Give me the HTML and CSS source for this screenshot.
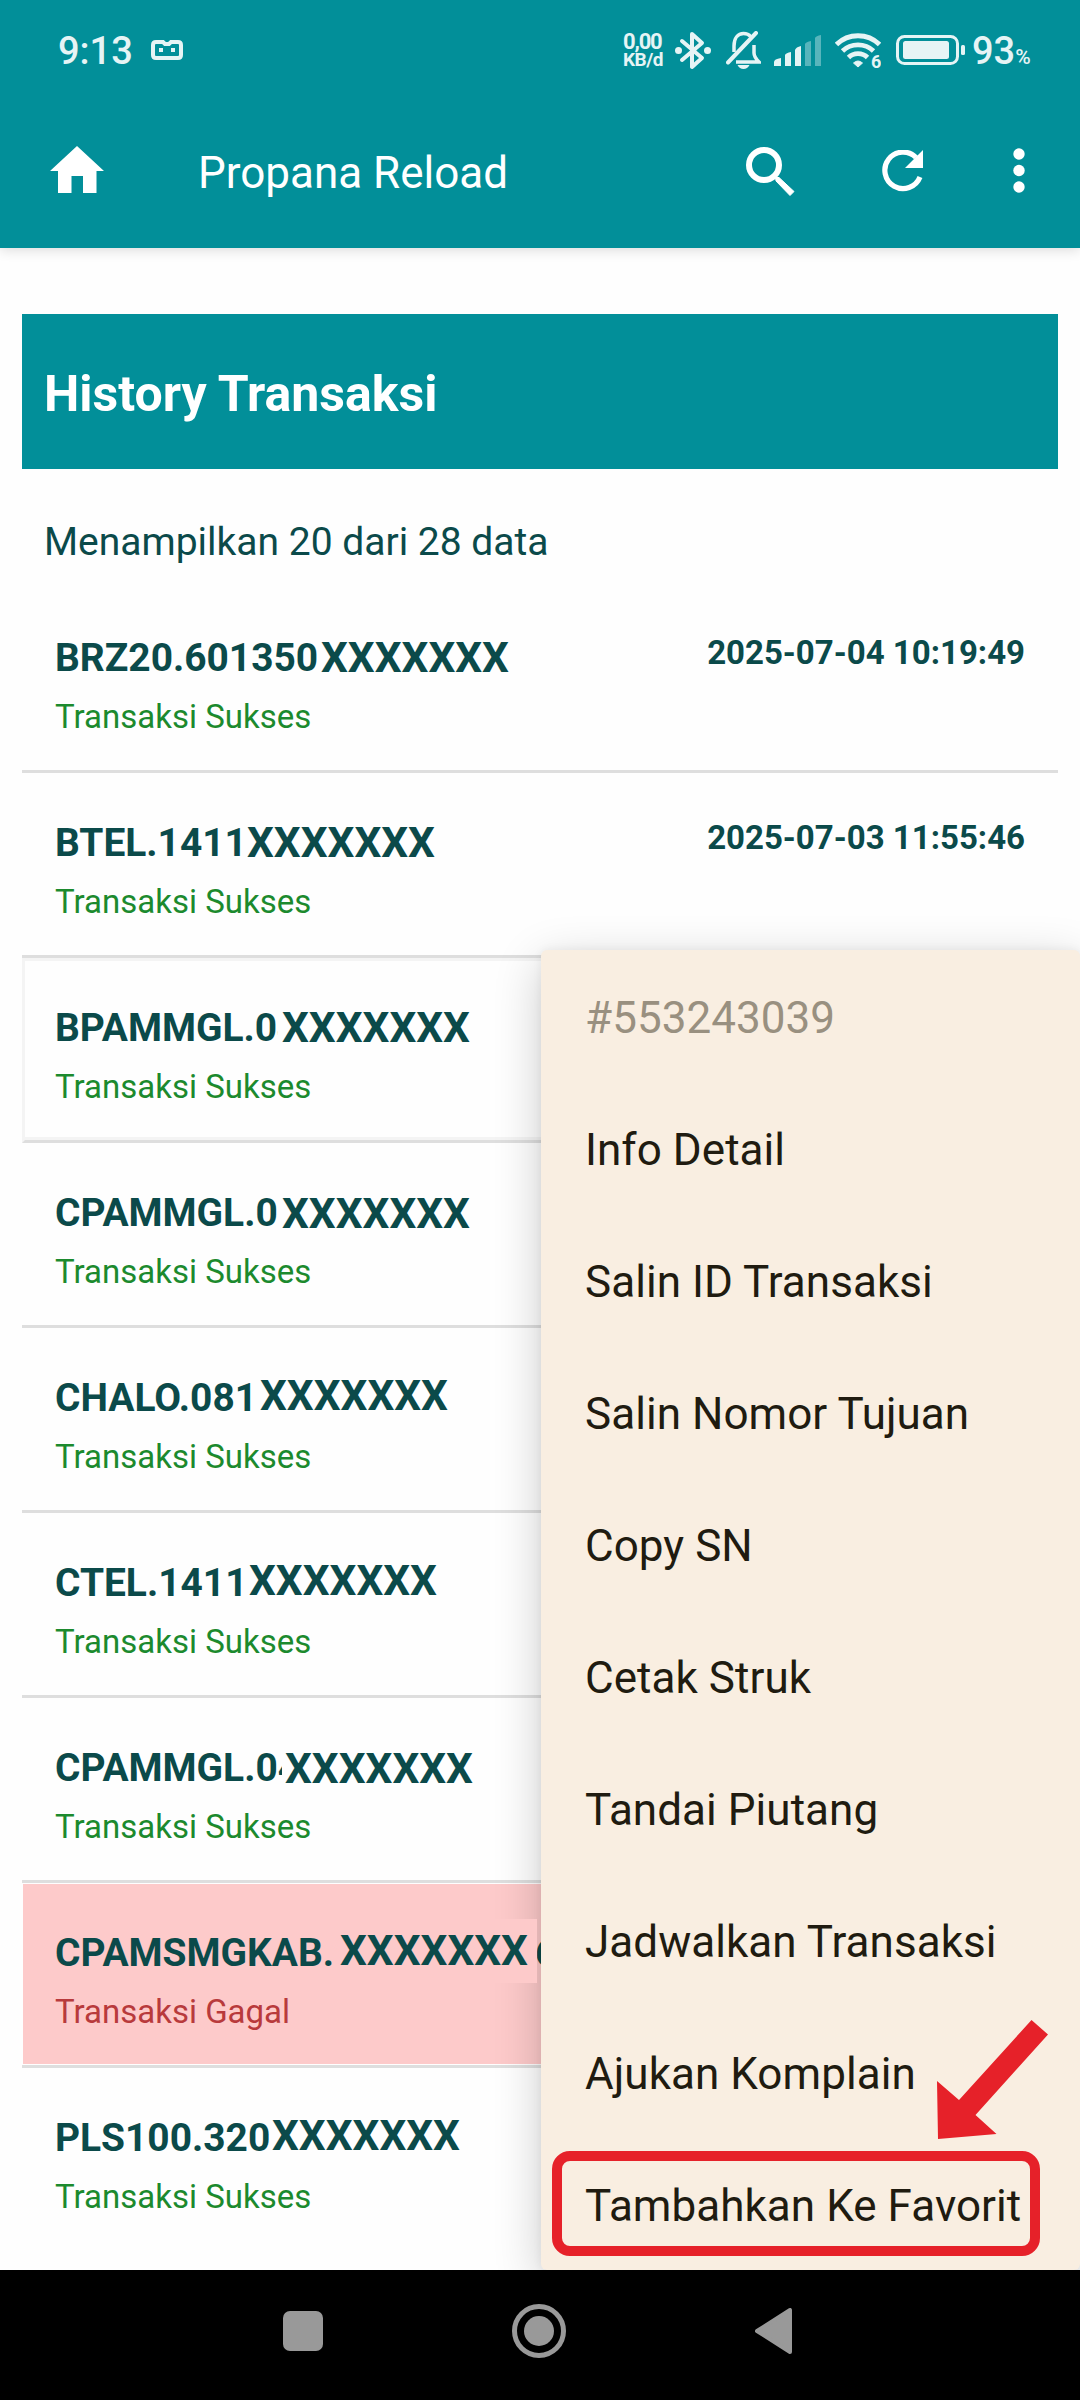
FILE: index.html
```html
<!DOCTYPE html>
<html lang="id">
<head>
  <meta charset="UTF-8">
  <meta name="viewport" content="width=device-width, initial-scale=1.0">
  <title>Propana Reload</title>
  <link rel="stylesheet" href="styles.css">
</head>
<body>

  <header class="top">
    <div class="status-bar">
      <span class="clock">9:13</span>
      <svg class="robot" width="32" height="20" viewBox="0 0 32 20">
        <path d="M2 5q0-3 3-3h7l2 2h4l2-2h7q3 0 3 3v10q0 3-3 3H5q-3 0-3-3z" fill="none" stroke="currentColor" stroke-width="4"/>
        <path d="M8 8h4v4H8zM20 8h4v4h-4z" fill="currentColor"/>
      </svg>
      <div class="net-speed"><span class="speed">0,00</span><span class="unit">KB/d</span></div>
      <svg class="bluetooth" width="36" height="39" viewBox="0 0 36 39">
        <path d="M7 10l20 17-10 9V3l10 9L7 29" fill="none" stroke="currentColor" stroke-width="4" stroke-linejoin="round" stroke-linecap="round"/>
        <circle cx="3.5" cy="19.5" r="3.5" fill="currentColor"/>
        <circle cx="32.5" cy="19.5" r="3.5" fill="currentColor"/>
      </svg>
      <svg class="bell" width="35" height="38" viewBox="0 0 35 38">
        <path d="M8 21v-6c0-8 4-12.500 9.500-12.500 3 0 5.500 1 7 3M10 31h23c-3-3-5-5-5-9v-8" fill="none" stroke="currentColor" stroke-width="3.500"/>
        <path d="M2 31.500L30 2" stroke="currentColor" stroke-width="4" stroke-linecap="round"/>
        <path d="M11.500 34h12q-2 4-6 4t-6-4z" fill="currentColor"/>
      </svg>
      <svg class="signal" width="48" height="31" viewBox="0 0 48 31">
        <path d="M0 31v-4q0-3 7-4v8zM11 31V20q1-2 6-3v14zM21 31V15q1-3 6-4v20z" fill="currentColor"/>
        <path d="M31 31V9q1-2 6-3v25zM41 31V3q1-2 6-3v31z" fill="currentColor" opacity=".38"/>
      </svg>
      <svg class="wifi" width="46" height="35" viewBox="0 0 46 35">
        <g fill="none" stroke="currentColor" stroke-width="4.800">
          <path d="M1.500 11.500a30 29 0 0 1 43 0"/>
          <path d="M7.500 18a22 21 0 0 1 31 0"/>
          <path d="M13.500 24.500a13 12 0 0 1 19 0"/>
        </g>
        <path d="M18.500 30q4.500-4 9 0l-4.500 4z" fill="currentColor" stroke="currentColor" stroke-linejoin="round"/>
        <text x="36" y="34.500" class="wifi-gen">6</text>
      </svg>
      <svg class="battery" width="69" height="30" viewBox="0 0 69 30">
        <rect x="1.500" y="1.500" width="60" height="27" rx="7" fill="none" stroke="currentColor" stroke-width="3"/>
        <rect x="7" y="6" width="46" height="18" rx="2.500" fill="currentColor"/>
        <rect x="65" y="10" width="4" height="10" rx="1.500" fill="currentColor"/>
      </svg>
      <span class="percent">93<small>%</small></span>
    </div>

    <div class="app-bar">
      <svg class="home" width="54" height="47" viewBox="0 0 54 47">
        <path d="M27 0l27 25h-7.500v22H33V30H21.500v17H8V25H0z" fill="currentColor"/>
      </svg>
      <span class="app-title">Propana Reload</span>
      <svg class="search" width="49" height="49" viewBox="0 0 49 49">
        <circle cx="18" cy="18" r="15" fill="none" stroke="currentColor" stroke-width="6"/>
        <path d="M29.500 30.500h3.500L48 44.500l-4 4L30 34z" fill="currentColor" stroke="currentColor"/>
      </svg>
      <svg class="refresh" width="42" height="42" viewBox="0 0 42 42">
        <path d="M34 7.500A18.200 18.200 0 1 0 38 27" fill="none" stroke="currentColor" stroke-width="5.200"/>
        <path d="M41 0v18H23z" fill="currentColor"/>
      </svg>
      <svg class="more" width="12" height="46" viewBox="0 0 12 46">
        <circle cx="6" cy="6" r="5.700" fill="currentColor"/>
        <circle cx="6" cy="22.500" r="5.700" fill="currentColor"/>
        <circle cx="6" cy="39" r="5.700" fill="currentColor"/>
      </svg>
    </div>
  </header>

  <main class="content">
    <h1>History Transaksi</h1>
    <p class="summary">Menampilkan 20 dari 28 data</p>

    <ul class="history">
      <li>
        <div class="trx"><span class="code c1">BRZ20.601350</span><span class="mask">XXXXXXX</span></div>
        <span class="state">Transaksi Sukses</span>
        <time>2025-07-04 10:19:49</time>
      </li>
      <li>
        <div class="trx"><span class="code c2">BTEL.1411</span><span class="mask">XXXXXXX</span></div>
        <span class="state">Transaksi Sukses</span>
        <time>2025-07-03 11:55:46</time>
      </li>
      <li class="selected">
        <div class="trx"><span class="code c3">BPAMMGL.04</span><span class="mask">XXXXXXX</span></div>
        <span class="state">Transaksi Sukses</span>
      </li>
      <li>
        <div class="trx"><span class="code c4">CPAMMGL.0</span><span class="mask low">XXXXXXX</span></div>
        <span class="state">Transaksi Sukses</span>
      </li>
      <li>
        <div class="trx"><span class="code c5">CHALO.081</span><span class="mask high">XXXXXXX</span></div>
        <span class="state">Transaksi Sukses</span>
      </li>
      <li>
        <div class="trx"><span class="code c6">CTEL.1411</span><span class="mask high">XXXXXXX</span></div>
        <span class="state">Transaksi Sukses</span>
      </li>
      <li>
        <div class="trx"><span class="code c7">CPAMMGL.04</span><span class="mask low">XXXXXXX</span></div>
        <span class="state">Transaksi Sukses</span>
      </li>
      <li class="failed">
        <div class="trx"><span class="code c8">CPAMSMGKAB.</span><span class="mask high">XXXXXXX</span><span class="code tail">6</span></div>
        <span class="state">Transaksi Gagal</span>
      </li>
      <li>
        <div class="trx"><span class="code c9">PLS100.320</span><span class="mask high">XXXXXXX</span></div>
        <span class="state">Transaksi Sukses</span>
      </li>
    </ul>
  </main>

  <div class="menu">
    <div class="menu-item menu-id">#553243039</div>
    <div class="menu-item">Info Detail</div>
    <div class="menu-item">Salin ID Transaksi</div>
    <div class="menu-item">Salin Nomor Tujuan</div>
    <div class="menu-item">Copy SN</div>
    <div class="menu-item">Cetak Struk</div>
    <div class="menu-item">Tandai Piutang</div>
    <div class="menu-item">Jadwalkan Transaksi</div>
    <div class="menu-item">Ajukan Komplain</div>
    <div class="menu-item">Tambahkan Ke Favorit</div>
    <div class="highlight"></div>
    <svg class="arrow" width="111" height="119" viewBox="0 0 111 119">
      <path d="M94.500 0L111 14.500 38.500 95 59.500 114 1 119 0 61 22 80z" fill="#e62129"/>
    </svg>
  </div>

  <nav class="nav-bar">
    <svg width="40" height="40" viewBox="0 0 40 40"><rect width="40" height="40" rx="7" fill="currentColor"/></svg>
    <svg width="54" height="54" viewBox="0 0 54 54">
      <circle cx="27" cy="27" r="24.500" fill="none" stroke="currentColor" stroke-width="5"/>
      <circle cx="27" cy="27" r="15" fill="currentColor"/>
    </svg>
    <svg width="38" height="46" viewBox="0 0 38 46">
      <path d="M35 2v42L2 23z" fill="currentColor" stroke="currentColor" stroke-width="4" stroke-linejoin="round"/>
    </svg>
  </nav>

</body>
</html>
```
FILE: styles.css
```css
:root {
  --primary: #028f99;
  --text: #0b4a4a;
  --success: #1c8a2e;
  --danger: #b83a3c;
  --divider: #dedede;
}

* {
  box-sizing: border-box;
}

body {
  margin: 0;
  width: 1080px;
  height: 2400px;
  overflow: hidden;
  display: flex;
  flex-direction: column;
  position: relative;
  background: #fefefe;
  font-family: Roboto, sans-serif;
  color: var(--text);
}

svg {
  display: block;
  flex: none;
}

/* header */
.top {
  height: 248px;
  flex: none;
  background: var(--primary);
  color: #fff;
  box-shadow: 0 2px 12px rgba(0, 0, 0, 0.14);
}

.status-bar {
  display: flex;
  align-items: center;
  height: 100px;
  padding-left: 58px;
  color: #e6f4f5;
}

.clock,
.percent {
  padding-top: 2px;
  font-size: 38px;
  font-weight: 500;
  line-height: 44px;
}

.clock {
  width: 93px;
}

.net-speed {
  display: flex;
  flex-direction: column;
  width: 52px;
  margin-left: 440px;
  padding-top: 1px;
  font-weight: 700;
  line-height: 18px;
}

.speed {
  font-size: 22px;
  letter-spacing: -1.2px;
}

.unit {
  font-size: 19px;
  letter-spacing: -0.5px;
}

.bell {
  margin-left: 15px;
}

.signal {
  margin-left: 13px;
}

.wifi {
  margin-left: 13px;
}

.wifi-gen {
  font-size: 18px;
  font-weight: 700;
  fill: currentColor;
}

.battery {
  margin-left: 15px;
}

.percent {
  margin-left: 7px;
}

.percent small {
  font-size: 21px;
  line-height: 1;
}

.app-bar {
  display: flex;
  align-items: center;
  height: 142px;
  padding-left: 50px;
}

.home {
  margin-bottom: 4px;
}

.app-title {
  width: 548px;
  margin-left: 94px;
  padding-top: 3px;
  font-size: 44px;
  line-height: 52px;
}

.refresh {
  margin-left: 87px;
}

.more {
  margin-left: 89px;
}

/* content */
.content {
  flex: 1;
  padding: 66px 22px 0;
  min-height: 0;
}

h1 {
  margin: 0;
  height: 155px;
  padding-left: 22px;
  background: var(--primary);
  color: #fff;
  font-size: 50px;
  font-weight: 700;
  line-height: 161px;
}

.summary {
  margin: 0;
  height: 119px;
  padding: 50px 22px 0;
  font-size: 39px;
  line-height: 46px;
}

.history {
  list-style: none;
  margin: 0;
  padding: 0;
}

.history li {
  display: grid;
  grid-template-columns: 1fr auto;
  grid-template-rows: 60px 46px;
  height: 185px;
  padding: 46px 33px 0;
  border-bottom: 3px solid var(--divider);
}

.history li:last-child {
  border-bottom: none;
}

.trx {
  display: flex;
  align-items: center;
  height: 48px;
  white-space: nowrap;
}

.code {
  flex: none;
  overflow: hidden;
  font-size: 38.9px;
  font-weight: 700;
  line-height: 46px;
}

.mask {
  font-size: 42.3px;
  font-weight: 700;
  line-height: 46px;
}

.low {
  margin-top: 2px;
}

.high {
  margin-bottom: 4px;
}

/* width of the code that stays readable */
.c1 { width: 266px; }
.c2 { width: 192px; }
.c3 { width: 223px; margin-right: 4px; }
.c4 { width: 227px; }
.c5 { width: 205px; }
.c6 { width: 194px; }
.c7 { width: 227px; margin-right: 3px; }
.c8 { width: 285px; }
.c9 { width: 217px; }

.tail {
  margin-left: -2px;
}

.state {
  grid-row: 2;
  font-size: 33px;
  line-height: 46px;
  color: var(--success);
}

time {
  grid-column: 2;
  grid-row: 1;
  font-size: 33px;
  font-weight: 700;
  line-height: 38px;
}

.history .selected {
  padding: 43px 30px 0;
  border: 3px solid #f4f4f4;
  border-bottom: 3px solid var(--divider);
  box-shadow: inset 0 -3px #f4f4f4;
}

.history .failed {
  background: #fdcaca;
  box-shadow: inset 0 0 0 1px #fefefe;
}

.failed .state {
  color: var(--danger);
}

/* stays above the menu shadow */
.failed .mask {
  position: relative;
  z-index: 1;
  flex: none;
  width: 197px;
  line-height: 64px;
  background: #fdcaca;
}

/* popup menu over the list */
.menu {
  position: absolute;
  left: 541px;
  top: 950px;
  width: 539px;
  height: 1320px;
  background: #f9eee1;
  border-radius: 6px;
  box-shadow: 0 12px 48px rgba(0, 0, 0, 0.2), 0 0 10px rgba(0, 0, 0, 0.06);
}

.menu-item {
  height: 132px;
  padding-left: 44px;
  font-size: 44px;
  line-height: 136px;
  letter-spacing: 0.05px;
  color: #201b10;
  white-space: nowrap;
}

.menu-id {
  color: #999080;
}

.highlight {
  position: absolute;
  left: 11px;
  top: 1201px;
  width: 488px;
  height: 105px;
  border: 10px solid #e62129;
  border-radius: 18px;
}

.arrow {
  position: absolute;
  left: 396px;
  top: 1070px;
}

/* android buttons */
.nav-bar {
  position: relative;
  display: flex;
  flex: none;
  align-items: center;
  gap: 189px;
  height: 130px;
  padding: 0 0 8px 283px;
  background: #000;
  color: #999;
}
```
